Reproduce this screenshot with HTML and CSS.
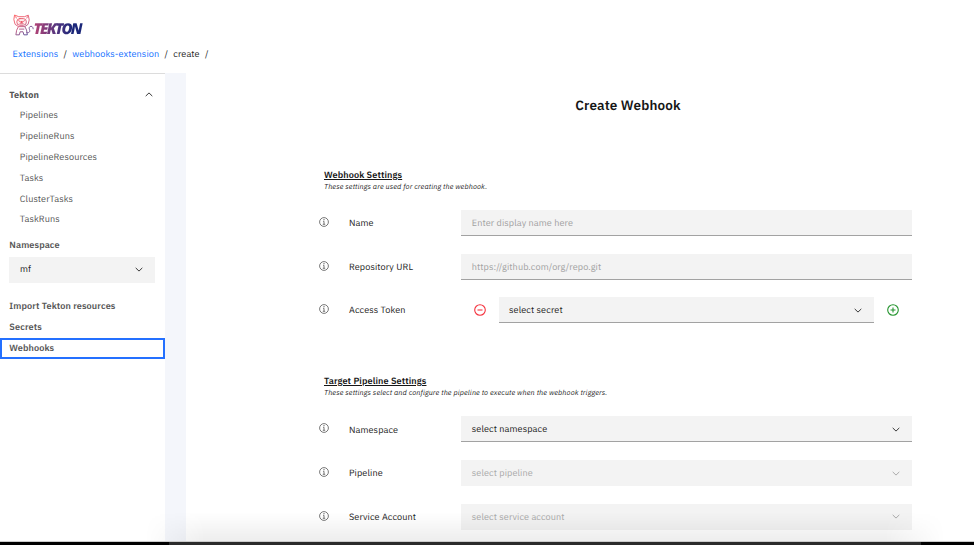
FILE: index.html
```
<!DOCTYPE html>
<html lang="en">
<head>
<meta charset="utf-8">
<title>Create Webhook</title>
<link rel="stylesheet" href="styles.css">
</head>
<body>
<svg class="defs" aria-hidden="true">
  <symbol id="chevron" viewBox="0 0 8 5"><path d="M.7.9 4 4.1 7.3.9" fill="none" stroke="currentColor"/></symbol>
  <symbol id="info" viewBox="0 0 10 10"><g fill="none" stroke="currentColor" stroke-width=".8"><circle cx="5" cy="5" r="4.4"/><path d="M4.1 4.3H5v2.9M3.8 7.3h2.4"/></g><circle cx="5" cy="2.7" r=".6" fill="currentColor"/></symbol>
</svg>
<header class="header">
  <div class="logo">
    <svg class="cat" viewBox="0 0 22 23">
      <defs><linearGradient id="fade" gradientUnits="userSpaceOnUse" x1="2" y1="2" x2="14" y2="24"><stop offset="0" stop-color="#fa5055"/><stop offset=".45" stop-color="#d84e70"/><stop offset="1" stop-color="#35388f"/></linearGradient></defs>
      <g fill="none" stroke="url(#fade)" stroke-width=".9" stroke-linejoin="round" stroke-linecap="round">
        <path d="M2 1.200 6 2.800h6l4-1.600 1 5-1.200 4.600-3.500 2.400H5.700l-3.500-2.400L1 6.200z"/>
        <path d="M3.500 4.200 2.800 2.800M14.500 4.200l.7-1.400"/>
        <rect x="4" y="4.800" width="10" height="7" rx="3.200" fill="#fa50551c"/>
        <path d="m6 7 1 .7M12 7l-1 .7M7.300 10.200h3.400"/>
        <path d="M5.500 13.500 3.800 17l-.8 4.800h3.600l.9-3.200h3l.9 3.200H15l-.8-5-1.700-3.500M6.800 15.800h4.600"/>
        <path d="M14.500 19.500c3 .5 3.500-1.200 2.800-3.200s-.3-3.200 1.500-3.400 2.200 1.400 2.300 2.600" stroke="#71448a"/>
      </g>
      <ellipse cx="9" cy="8.400" rx="1.500" ry="1" fill="#ef5264"/>
    </svg>
    <span class="wordmark">TEKTON</span>
  </div>
  <nav class="crumbs"><a>Extensions</a><i>/</i><a>webhooks-extension</a><i>/</i><span>create</span><i>/</i></nav>
</header>
<div class="body">
  <aside class="side">
    <div class="group"><b>Tekton</b><svg class="chev up"><use href="#chevron"/></svg></div>
    <ul class="items">
      <li>Pipelines</li><li>PipelineRuns</li><li>PipelineResources</li><li>Tasks</li><li>ClusterTasks</li><li>TaskRuns</li>
    </ul>
    <div class="ns-title">Namespace</div>
    <div class="select ns">mf<svg class="chev"><use href="#chevron"/></svg></div>
    <div class="link first">Import Tekton resources</div>
    <div class="link">Secrets</div>
    <div class="link active">Webhooks</div>
  </aside>
  <div class="strip"></div>
  <main class="main">
    <h1>Create Webhook</h1>
    <section class="hooks">
      <h2>Webhook Settings</h2>
      <p>These settings are used for creating the webhook.</p>
      <div class="row"><svg class="info"><use href="#info"/></svg><label>Name</label><div class="field placeholder">Enter display name here</div></div>
      <div class="row"><svg class="info"><use href="#info"/></svg><label>Repository URL</label><div class="field placeholder">https://github.com/org/repo.git</div></div>
      <div class="row token"><svg class="info"><use href="#info"/></svg><label>Access Token</label>
        <svg class="round minus" viewBox="0 0 12 12"><circle cx="6" cy="6" r="5.300"/><path d="M3.500 6h5"/></svg>
        <div class="field select">select secret<svg class="chev"><use href="#chevron"/></svg></div>
        <svg class="round plus" viewBox="0 0 12 12"><circle cx="6" cy="6" r="5.300"/><path d="M3.500 6h5M6 3.500v5"/></svg>
      </div>
    </section>
    <section class="target">
      <h2>Target Pipeline Settings</h2>
      <p>These settings select and configure the pipeline to execute when the webhook triggers.</p>
      <div class="row"><svg class="info"><use href="#info"/></svg><label>Namespace</label><div class="field select">select namespace<svg class="chev"><use href="#chevron"/></svg></div></div>
      <div class="row"><svg class="info"><use href="#info"/></svg><label>Pipeline</label><div class="field select disabled">select pipeline<svg class="chev"><use href="#chevron"/></svg></div></div>
      <div class="row"><svg class="info"><use href="#info"/></svg><label>Service Account</label><div class="field select disabled">select service account<svg class="chev"><use href="#chevron"/></svg></div></div>
    </section>
  </main>
</div>
<div class="shade"></div>
<div class="edge"></div>
</body>
</html>
```
FILE: styles.css
```
* { box-sizing: border-box; }
body { margin: 0; width: 974px; height: 545px; overflow: hidden; position: relative; background: #fff; color: #242424; font: 9.1px/20.8px "IBM Plex Sans", "Noto Sans", sans-serif; letter-spacing: .104px; text-rendering: geometricPrecision; }
.defs { position: absolute; width: 0; height: 0; }
.header { height: 73px; padding: 14px 0 0 13px; }
.logo { display: flex; height: 23px; }
.cat { width: 21px; height: 22px; }
.wordmark { font: italic 800 15px/15px "Open Sans", sans-serif; letter-spacing: -1.75px; margin: 8px 0 0 -.5px; height: 15px; padding-right: 4px; background: linear-gradient(90deg, #b44376, #52357f 45%, #1b2779 75%); -webkit-background-clip: text; background-clip: text; color: transparent; }
.crumbs { display: flex; margin: 7px 0 0 -.4px; line-height: 20px; white-space: nowrap; }
.crumbs a { color: #1471ff; }
.crumbs i { width: 14px; text-align: center; font-style: normal; }
.body { display: flex; height: 469px; }
.side { width: 165.4px; border-top: 1px solid #dcdcdc; padding-top: 10.6px; color: #565656; }
.group { display: flex; align-items: center; justify-content: space-between; padding: 0 12px 0 9.3px; font-weight: 600; }
.chev { width: 8px; height: 5px; flex: none; color: #393939; }
.up { transform: rotate(180deg); }
.items { list-style: none; margin: 0; padding: 0 0 0 19.8px; }
.ns-title { font-weight: 600; padding-left: 9.3px; margin-top: 5.3px; }
.select { display: flex; align-items: center; justify-content: space-between; padding-right: 11.5px; }
.ns { width: 145.5px; height: 26px; margin: .3px 0 0 9.4px; padding-left: 10.5px; background: #f3f3f3; color: #242424; }
.link { padding-left: 9.3px; font-weight: 600; }
.first { margin-top: 13.9px; }
.active { outline: 2px solid #2470ff; outline-offset: -2px; }
.strip { width: 20.6px; background: #f4f6fb; }
.main { flex: 1; padding-left: 132px; }
h1 { margin: 20.8px 0 0 -22px; width: 664px; text-align: center; font-size: 13.5px; line-height: 22px; font-weight: 600; color: #161616; letter-spacing: .15px; }
h2 { margin: 0 0 0 6px; font-size: 9.1px; line-height: 12px; font-weight: 600; text-decoration: underline; color: #161616; }
p { margin: 0 0 0 6px; padding-top: 1px; font-size: 7.28px; line-height: 12px; font-style: italic; white-space: nowrap; }
.hooks { margin-top: 53.4px; }
.target { margin-top: 51.7px; }
p + .row { margin-top: 16px; }
.target p + .row { margin-top: 16.4px; }
.row { display: flex; height: 26px; margin-bottom: 17.6px; align-items: center; }
.info { width: 10px; height: 10px; margin: 0 20px 2px 1px; color: #555; }
label { width: 112.3px; white-space: nowrap; padding-top: 1px; }
.field { width: 450.5px; height: 26px; background: #f3f3f3; border-bottom: 1px solid #a2a2a2; padding-left: 10.5px; line-height: 26px; }
.placeholder { color: #a2a2a2; }
.disabled { color: #aaa; border-color: transparent; background-clip: border-box; }
.disabled .chev { color: #aaa; }
.field.select { padding: 1px 11.5px 0 10.5px; }
.token .field { width: 375.3px; }
.round { width: 12px; height: 12px; fill: none; stroke-width: 1.1; }
.minus { stroke: #f5333f; margin: 0 12.2px 0 13.1px; }
.plus { stroke: #24942e; margin-left: 12.9px; }
.shade { position: absolute; left: 145px; top: 512px; width: 800px; height: 30px; background: linear-gradient(#0000, #00000012); -webkit-mask: linear-gradient(90deg, #0000, #000 60px, #000 740px, #0000); mask: linear-gradient(90deg, #0000, #000 60px, #000 740px, #0000); }
.edge { position: absolute; left: 0; top: 542px; width: 974px; height: 3px; background: linear-gradient(90deg, #000 169px, #2b2b2b 169px, #2b2b2b 921px, #000 921px); box-shadow: 0 -1px 0 #ccc; }
```
